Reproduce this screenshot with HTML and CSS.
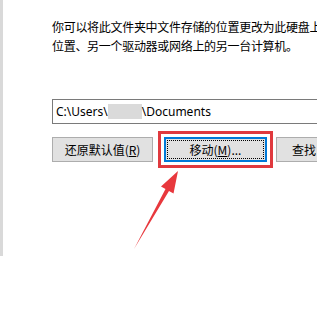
FILE: index.html
```html
<!DOCTYPE html>
<html lang="zh-CN">
<head>
    <meta charset="UTF-8">
    <title>位置</title>
    <link rel="stylesheet" href="styles.css">
</head>
<body>
    <div class="panel">
        <p class="desc">你可以将此文件夹中文件存储的位置更改为此硬盘上的另一<br>位置、另一个驱动器或网络上的另一台计算机。</p>
        <div class="path-box">C:\Users\<span class="blur"></span>\Documents</div>
        <div class="btn-row">
            <button class="btn btn-restore">还原默认值(<u>R</u>)</button>
            <button class="btn btn-move"><span class="focus">移动(<u>M</u>)...</span></button>
            <button class="btn btn-find">查找目标(<u>F</u>)...</button>
        </div>
    </div>

    <svg class="arrow" width="317" height="336" viewBox="0 0 317 336">
        <polygon points="178,171 173.5,193.5 169,191 134,249 165.5,189 161,186.5" fill="#e8383d"/>
    </svg>
</body>
</html>
```

FILE: styles.css
```css
body {
    margin: 0;
    padding: 0;
    background: #fff;
    font-family: "Noto Sans", "Noto Sans CJK SC", sans-serif;
    font-size: 12px;
    color: #000;
    overflow: hidden;
}
.panel {
    height: 256px;
    box-sizing: border-box;
    border-left: 3px solid #d9d9d9;
    padding: 17px 0 0 49px;
    overflow: hidden;
}
.desc {
    margin: 0;
    font-family: "Noto Sans CJK SC", sans-serif;
    font-size: 12px;
    line-height: 19px;
    letter-spacing: -0.3px;
    white-space: nowrap;
}
.path-box {
    margin-top: 44px;
    width: 300px;
    height: 25px;
    box-sizing: border-box;
    border: 1px solid #7a7a7a;
    padding-left: 3px;
    line-height: 23px;
    white-space: nowrap;
}
.blur {
    display: inline-block;
    width: 34px;
    height: 15px;
    background: #dadada;
    vertical-align: -3px;
}
.btn-row {
    display: flex;
    margin-top: 13px;
    white-space: nowrap;
}
.btn {
    flex: none;
    height: 25px;
    box-sizing: border-box;
    background: #e1e1e1;
    border: 1px solid #adadad;
    font-family: "Noto Sans CJK SC", sans-serif;
    font-size: 12px;
    color: #000;
    padding: 0;
}
.btn-restore { width: 101px; }
.btn-move {
    width: 103px;
    margin-left: 11px;
    border: 2px solid #0078d7;
    padding: 1px;
    outline: 3px solid #e0393e;
    outline-offset: 3px;
}
.btn-move .focus {
    display: block;
    height: 100%;
    box-sizing: border-box;
    border: 1px dotted #000;
    line-height: 17px;
}
.btn-find {
    width: 90px;
    margin-left: 9px;
    text-align: left;
    padding-left: 15px;
}
.arrow {
    position: absolute;
    left: 0;
    top: 0;
}
```
